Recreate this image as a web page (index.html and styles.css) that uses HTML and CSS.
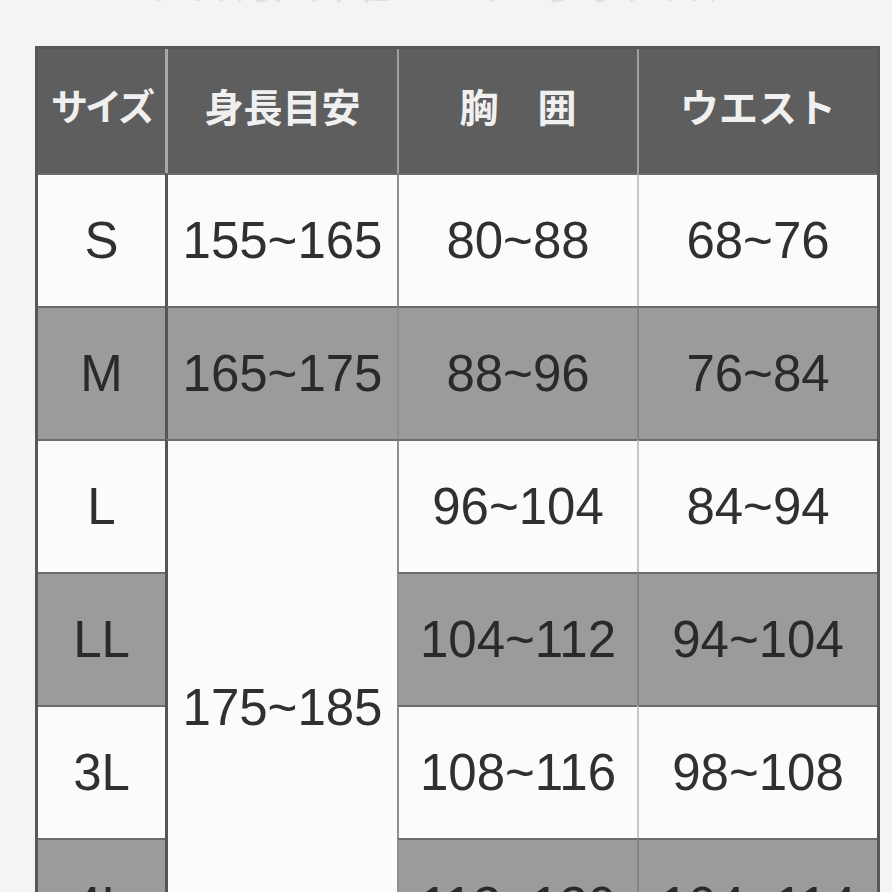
FILE: index.html
```html
<!DOCTYPE html>
<html lang="ja">
<head>
<meta charset="utf-8">
<title>サイズ表</title>
<link rel="stylesheet" href="styles.css">
</head>
<body>
<div class="page">
  <div class="caption">サイズ表（単位：cm）　参考サイズ</div>
  <table class="size-table">
    <thead>
      <tr class="head">
        <th class="c1 narrow">サイズ</th>
        <th class="c2">身長目安</th>
        <th class="c3">胸　囲</th>
        <th class="c4">ウエスト</th>
      </tr>
    </thead>
    <tbody>
      <tr class="light">
        <td class="c1">S</td><td class="c2">155~165</td><td class="c3">80~88</td><td class="c4">68~76</td>
      </tr>
      <tr class="dark">
        <td class="c1">M</td><td class="c2">165~175</td><td class="c3">88~96</td><td class="c4">76~84</td>
      </tr>
      <tr class="light">
        <td class="c1">L</td><td class="c2 span" rowspan="4">175~185</td><td class="c3">96~104</td><td class="c4">84~94</td>
      </tr>
      <tr class="dark">
        <td class="c1">LL</td><td class="c3">104~112</td><td class="c4">94~104</td>
      </tr>
      <tr class="light">
        <td class="c1">3L</td><td class="c3">108~116</td><td class="c4">98~108</td>
      </tr>
      <tr class="dark">
        <td class="c1">4L</td><td class="c3">112~120</td><td class="c4">104~114</td>
      </tr>
    </tbody>
  </table>
</div>
</body>
</html>
```

FILE: styles.css
```css
html, body {
  margin: 0;
  padding: 0;
  background: #f4f4f4;
  overflow: hidden;
}

.page {
  width: 892px;
  height: 892px;
  padding-left: 35px;
  box-sizing: border-box;
  overflow: hidden;
}

.caption {
  margin-top: -31px;
  height: 77px;
  padding-left: 110px;
  font-family: "Noto Sans CJK JP", sans-serif;
  font-weight: 700;
  font-size: 30px;
  line-height: 34px;
  color: #e0e0e0;
  letter-spacing: 6px;
}

.size-table {
  border-collapse: separate;
  border-spacing: 0;
  table-layout: fixed;
  width: 845px;
  border: 3px solid #575757;
  border-bottom: none;
  font-family: "Liberation Sans", Arial, sans-serif;
}

.size-table th,
.size-table td {
  box-sizing: border-box;
  padding: 0;
  text-align: center;
  vertical-align: middle;
}

.c1 { width: 127px; }
.c2 { width: 232px; }
.c3 { width: 240px; }
.c4 { width: 240px; }

.head {
  height: 124px;
  background: #5e5e5e;
}

.head th {
  font-family: "Noto Sans CJK JP", sans-serif;
  font-weight: 700;
  font-size: 39px;
  color: #f0f0f0;
  padding-bottom: 12px;
}

.head th.narrow {
  font-size: 37px;
  letter-spacing: -3px;
}

.head th.c2 { border-left: 3px solid #a8a8a8; }
.head th.c3 { border-left: 2px solid #a0a0a0; }
.head th.c4 { border-left: 2px solid #a0a0a0; }

tbody tr { height: 133px; }

tbody td {
  font-size: 51px;
  color: #303030;
  border-top: 2px solid #6c6c6c;
  padding-top: 6px;
}

tbody td.c2 { border-left: 3px solid #555555; }
tbody td.c3 { border-left: 2px solid #8f8f8f; }
tbody td.c4 { border-left: 2px solid #c6c6c6; }

.light td { background: #fbfbfb; }
.dark td { background: #9b9b9b; color: #2a2a2a; }
.dark td.c4 { border-left-color: #858585; }

.size-table td.span {
  background: #fbfbfb;
  color: #303030;
  padding-top: 2px;
}
```
